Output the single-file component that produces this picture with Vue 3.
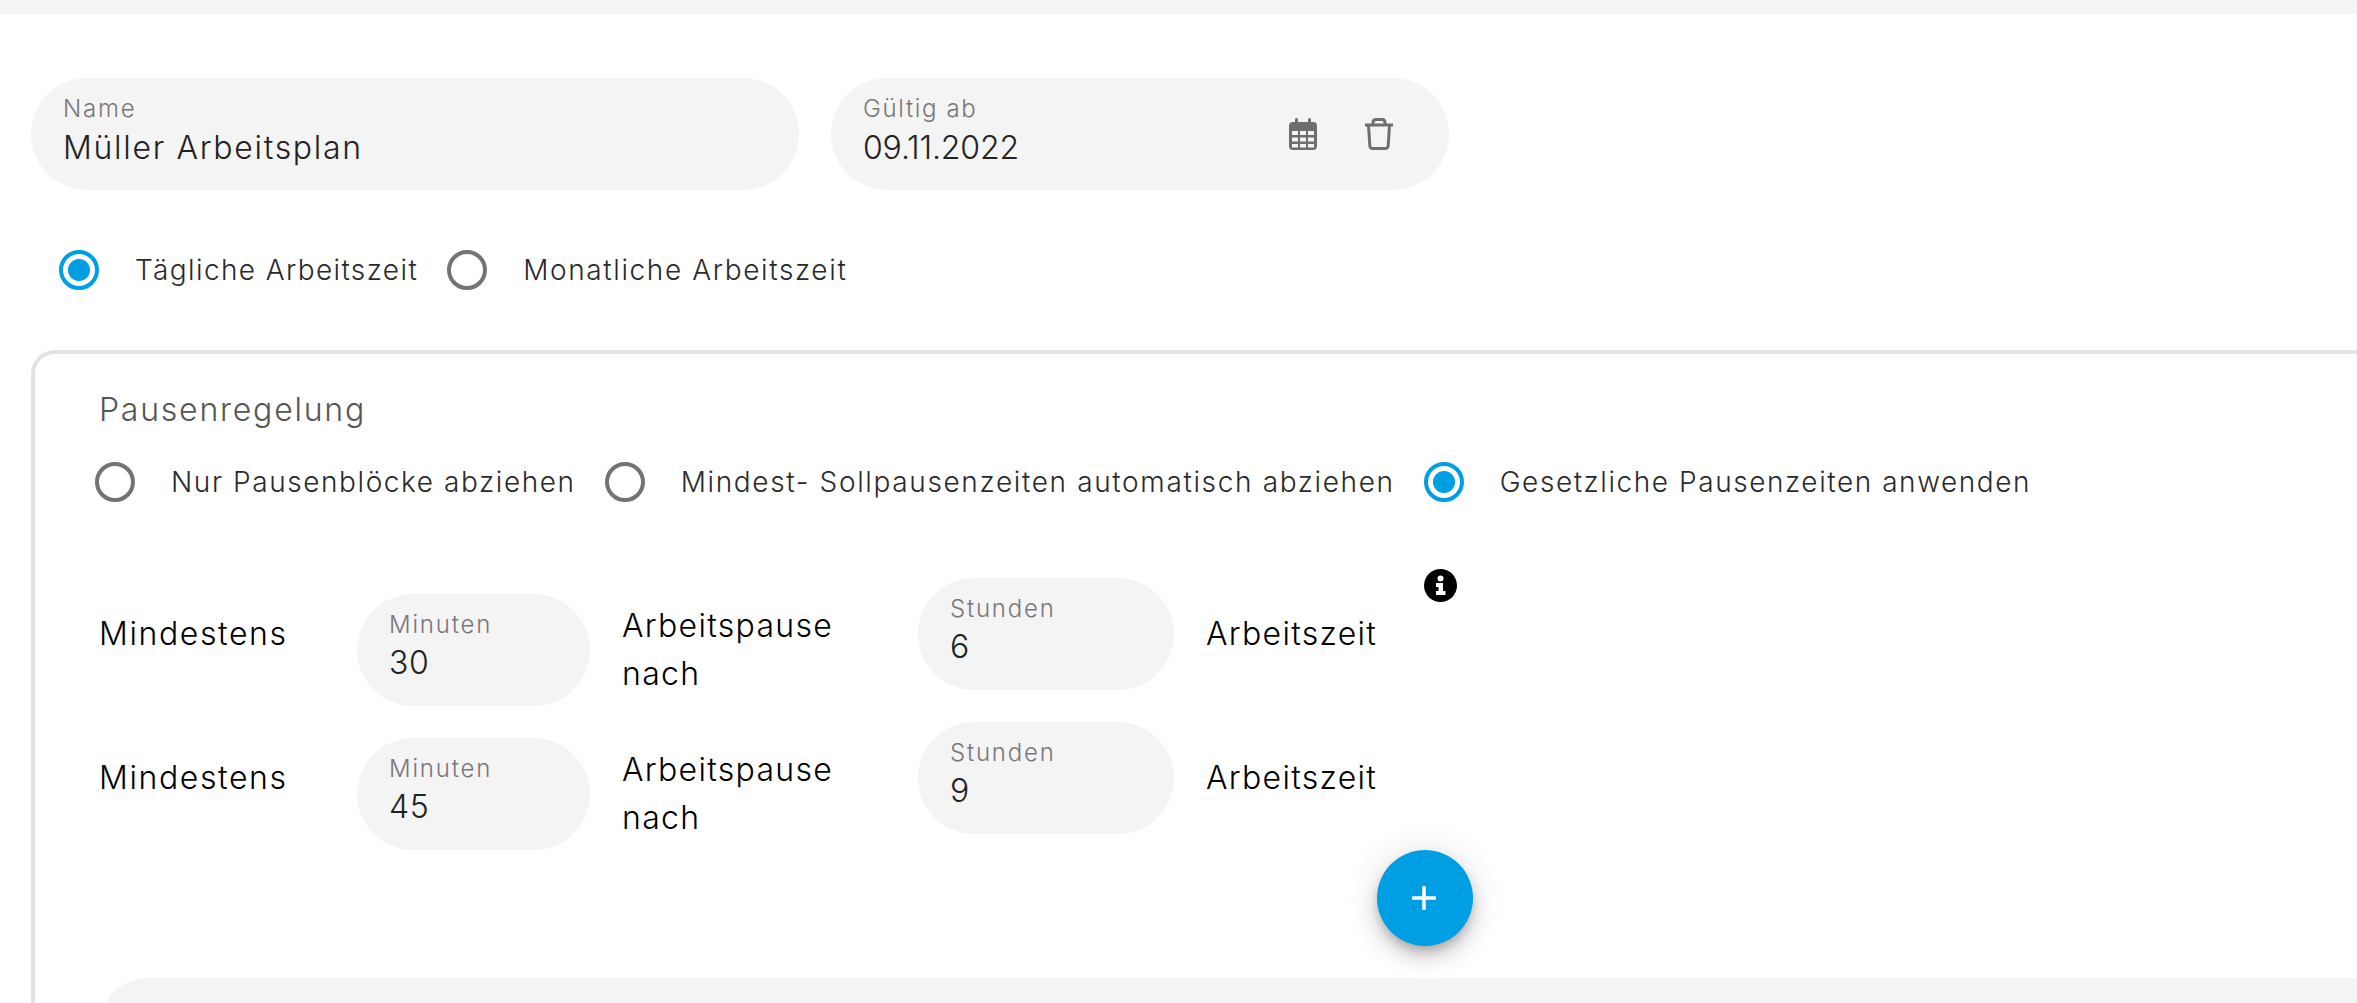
<script setup>
const dayOptions = [
  { label: 'Tägliche Arbeitszeit', on: true, cls: 'tight' },
  { label: 'Monatliche Arbeitszeit', on: false, cls: '' }
]
const breakOptions = [
  { label: 'Nur Pausenblöcke abziehen', on: false, cls: 'first' },
  { label: 'Mindest- Sollpausenzeiten automatisch abziehen', on: false, cls: 'wide' },
  { label: 'Gesetzliche Pausenzeiten anwenden', on: true, cls: 'last' }
]
const rows = [
  { minutes: '30', hours: '6', info: true },
  { minutes: '45', hours: '9', info: false }
]
</script>

<template>
  <div class="page">
    <div class="topbar"></div>
    <main class="content">
      <div class="fields">
        <div class="pill name">
          <span class="label">Name</span>
          <span class="value">Müller Arbeitsplan</span>
        </div>
        <div class="pill date">
          <div class="date-text">
            <span class="label">Gültig ab</span>
            <span class="value">09.11.2022</span>
          </div>
          <svg class="cal" width="28" height="32" viewBox="0 0 28 32">
            <rect x="6" y="0" width="3" height="6" rx="1.5" fill="#6e6e6e" />
            <rect x="19" y="0" width="3" height="6" rx="1.5" fill="#6e6e6e" />
            <rect x="0" y="4" width="28" height="28" rx="4" fill="#6e6e6e" />
            <g fill="#f4f4f4">
              <rect x="3" y="13" width="6" height="4" /><rect x="11" y="13" width="6" height="4" /><rect x="19" y="13" width="6" height="4" />
              <rect x="3" y="19.5" width="6" height="4" /><rect x="11" y="19.5" width="6" height="4" /><rect x="19" y="19.5" width="6" height="4" />
              <rect x="3" y="26" width="6" height="3.5" /><rect x="11" y="26" width="6" height="3.5" /><rect x="19" y="26" width="6" height="3.5" />
            </g>
          </svg>
          <svg class="trash" width="28" height="32" viewBox="0 0 28 32" fill="none" stroke="#6e6e6e" stroke-width="3">
            <path d="M0 7h28" />
            <path d="M8 6V4.500C8 2.500 9.500 1.500 11 1.500h6c1.500 0 3 1 3 3V6" />
            <path d="M3.500 7l1.300 20.500c.1 1.700 1.300 3 3 3h12.400c1.700 0 2.900-1.300 3-3L24.500 7" />
          </svg>
        </div>
      </div>

      <div class="radios top-radios">
        <div v-for="o in dayOptions" :key="o.label" class="radio-item">
          <span class="radio" :class="{ on: o.on }"></span>
          <span class="radio-label" :class="o.cls">{{ o.label }}</span>
        </div>
      </div>

      <section class="card">
        <h2 class="title">Pausenregelung</h2>
        <div class="radios break-radios">
          <div v-for="o in breakOptions" :key="o.label" class="radio-item">
            <span class="radio" :class="{ on: o.on }"></span>
            <span class="radio-label" :class="o.cls">{{ o.label }}</span>
          </div>
        </div>

        <div class="rows">
          <div v-for="r in rows" :key="r.minutes" class="row">
            <span class="text c1">Mindestens</span>
            <div class="pill minutes">
              <span class="label">Minuten</span>
              <span class="value">{{ r.minutes }}</span>
            </div>
            <span class="text c3">Arbeitspause nach</span>
            <div class="pill hours">
              <span class="label">Stunden</span>
              <span class="value">{{ r.hours }}</span>
            </div>
            <span class="text c5">Arbeitszeit</span>
            <svg v-if="r.info" class="info" width="33" height="33" viewBox="0 0 33 33">
              <circle cx="16.500" cy="16.500" r="16.500" fill="#000" />
              <circle cx="16.500" cy="9.500" r="3" fill="#fff" />
              <path d="M12 14h7v8h2.500v4h-9.500v-4h2.500v-4H12z" fill="#fff" />
            </svg>
          </div>
        </div>

        <button class="fab" type="button" aria-label="Hinzufügen">
          <svg class="plus" width="24" height="24" viewBox="0 0 24 24">
            <path d="M12 1v22M1 12h22" stroke="#fff" stroke-width="3.500" stroke-linecap="round" />
          </svg>
        </button>

        <div class="next-block"></div>
      </section>
    </main>
  </div>
</template>

<style>
html, body { margin: 0; background: #fff; }
</style>

<style scoped>
.page {
  position: relative;
  width: 2357px;
  height: 1003px;
  overflow: hidden;
  background: #fff;
  font-family: Inter, "Liberation Sans", sans-serif;
  font-weight: 300;
}
.topbar { height: 14px; background: #f4f4f4; }
.content { padding: 64px 0 0 31px; width: 2600px; box-sizing: border-box; }
.fields { display: flex; gap: 32px; }
.pill {
  display: flex;
  flex-direction: column;
  box-sizing: border-box;
  height: 112px;
  padding: 13px 32px 0;
  border-radius: 56px;
  background: #f4f4f4;
}
.label { font-size: 24px; line-height: 36px; color: #777; letter-spacing: 1.8px; }
.value { font-size: 32px; line-height: 40px; color: #222; letter-spacing: 0.6px; }
.name { width: 768px; }
.name .value { letter-spacing: 1.7px; position: relative; top: 1px; }
.date { width: 618px; flex-direction: row; align-items: center; padding-top: 0; }
.date-text { display: flex; flex-direction: column; flex: 1; align-self: flex-start; margin-top: 13px; }
.date .label { letter-spacing: 1.65px; }
.date .value { letter-spacing: -0.15px; position: relative; top: 1px; }
.trash { margin-left: 48px; margin-right: 24px; }

.radios { display: flex; align-items: center; gap: 29px; }
.top-radios { margin: 60px 0 0 28px; }
.radio-item { display: flex; align-items: center; gap: 36px; }
.radio {
  box-sizing: border-box;
  width: 40px;
  height: 40px;
  border-radius: 50%;
  border: 4px solid #737373;
  background: #fff;
  flex: none;
}
.radio.on {
  border-color: #009fe3;
  background: radial-gradient(circle, #009fe3 0 10.5px, #fff 11.5px);
}
.radio-label { font-size: 28px; line-height: 40px; color: #2a2a2a; letter-spacing: 1.62px; white-space: nowrap; }
.radio-label.tight { letter-spacing: 1.38px; }
.radio-label.first { letter-spacing: 1.58px; }
.radio-label.wide { letter-spacing: 1.64px; }
.radio-label.last { letter-spacing: 1.56px; }

.card {
  box-sizing: border-box;
  margin-top: 60px;
  border: 4px solid #e2e2e2;
  border-radius: 24px;
  padding: 32px 0 0 65px;
  height: 900px;
}
.title { margin: 0 0 0 -1px; font-size: 32px; line-height: 48px; font-weight: 300; color: #555; letter-spacing: 1.77px; }
.break-radios { margin: 28px 0 0 -5px; }
.rows { display: flex; flex-direction: column; gap: 16px; margin-top: 76px; }
.row { position: relative; display: flex; align-items: flex-start; gap: 32px; height: 128px; }
.text { font-size: 32px; line-height: 48px; color: #000; letter-spacing: 1.3px; }
.c1 { width: 226px; margin: 32px 0 0 -1px; letter-spacing: 1.6px; }
.minutes { width: 233px; margin-top: 16px; }
.c3 { width: 264px; margin-top: 24px; }
.hours { width: 256px; }
.c5 { margin-top: 32px; }
.info { position: absolute; left: 1324px; top: -9px; }
.fab {
  display: flex;
  align-items: center;
  justify-content: center;
  width: 96px;
  height: 96px;
  margin: 0 0 0 1277px;
  padding: 0;
  border: none;
  border-radius: 50%;
  background: #009fe3;
  box-shadow: 0 6px 10px -2px rgba(0, 0, 0, .2), 0 12px 20px rgba(0, 0, 0, .14), 0 2px 36px rgba(0, 0, 0, .12);
}
.plus { margin: 0 2px 1px 0; }
.next-block {
  margin-top: 32px;
  width: 2400px;
  height: 300px;
  border-radius: 48px;
  background: #f4f4f4;
}
</style>
